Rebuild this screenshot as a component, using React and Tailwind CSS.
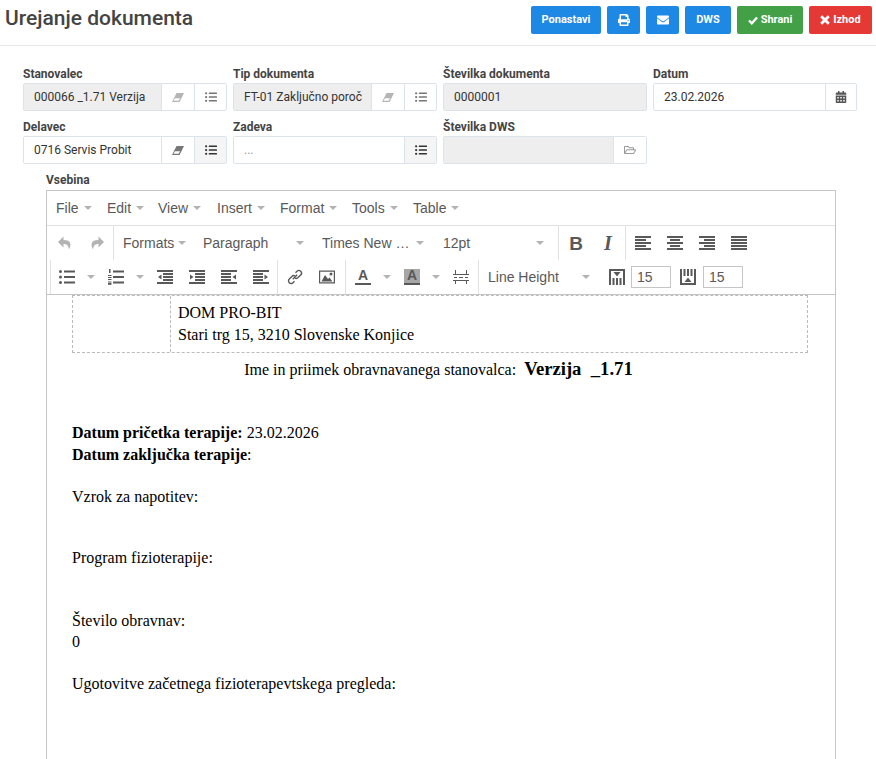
import React from "react";
import {
  FaCalendarAlt,
  FaEnvelope,
  FaListUl,
  FaPrint,
  FaRegFolderOpen,
} from "react-icons/fa";

const Lines = ({ rows }) => (
  <svg width="16" height="16" viewBox="0 0 16 16" fill="#595959">
    {rows.map((r, i) => (
      <rect key={i} x={r[0]} y={r[1]} width={r[2]} height="2" />
    ))}
  </svg>
);

const icons = {
  undo: (
    <svg width="16" height="16" viewBox="0 0 16 16" fill="#b3b3b3">
      <path d="M6.500 1.500 1 7l5.500 5.500V9c3 0 4.800 1 5.500 5.500 2.500-4.500 2.500-9.500-5.500-9.500z" />
    </svg>
  ),
  redo: (
    <svg width="16" height="16" viewBox="0 0 16 16" fill="#b3b3b3">
      <path d="M9.500 1.500 15 7l-5.500 5.500V9c-3 0-4.800 1-5.500 5.500C1.500 10 1.500 5 9.500 5z" />
    </svg>
  ),
  bold: <span className="font-bold text-[19px] leading-none text-[#595959]">B</span>,
  italic: <span className="font-['Liberation_Serif',serif] font-bold italic text-[20px] leading-none text-[#595959]">I</span>,
  alignLeft: <Lines rows={[[0, 1, 16], [0, 4, 11], [0, 7, 16], [0, 10, 11], [0, 13, 16]]} />,
  alignCenter: <Lines rows={[[0, 1, 16], [3, 4, 10], [0, 7, 16], [3, 10, 10], [0, 13, 16]]} />,
  alignRight: <Lines rows={[[0, 1, 16], [5, 4, 11], [0, 7, 16], [5, 10, 11], [0, 13, 16]]} />,
  alignJustify: <Lines rows={[[0, 1, 16], [0, 4, 16], [0, 7, 16], [0, 10, 16], [0, 13, 16]]} />,
  bullist: (
    <svg width="16" height="16" viewBox="0 0 16 16" fill="#595959">
      <circle cx="1.500" cy="2.500" r="1.500" />
      <circle cx="1.500" cy="8" r="1.500" />
      <circle cx="1.500" cy="13.500" r="1.500" />
      <rect x="5" y="1.500" width="11" height="2" />
      <rect x="5" y="7" width="11" height="2" />
      <rect x="5" y="12.500" width="11" height="2" />
    </svg>
  ),
  numlist: (
    <svg width="16" height="16" viewBox="0 0 16 16" fill="#595959">
      <rect x="5" y="1.500" width="11" height="2" />
      <rect x="5" y="7" width="11" height="2" />
      <rect x="5" y="12.500" width="11" height="2" />
      <rect x="1" y="0" width="1.500" height="4" />
      <rect x="0" y="6" width="3.500" height="1" />
      <rect x="0" y="8" width="3.500" height="1" />
      <rect x="0" y="10" width="3.500" height="1" />
      <rect x="0" y="12.500" width="3.500" height="1" />
      <rect x="0" y="14" width="3.500" height="1" />
      <rect x="0" y="15.200" width="3.500" height="0.800" />
    </svg>
  ),
  outdent: (
    <svg width="16" height="16" viewBox="0 0 16 16" fill="#595959">
      <rect x="0" y="1" width="16" height="2" />
      <rect x="6" y="4" width="10" height="2" />
      <rect x="6" y="7" width="10" height="2" />
      <rect x="6" y="10" width="10" height="2" />
      <rect x="0" y="13" width="16" height="2" />
      <path d="M4.500 5.500v5L1 8z" />
    </svg>
  ),
  indent: (
    <svg width="16" height="16" viewBox="0 0 16 16" fill="#595959">
      <rect x="0" y="1" width="16" height="2" />
      <rect x="6" y="4" width="10" height="2" />
      <rect x="6" y="7" width="10" height="2" />
      <rect x="6" y="10" width="10" height="2" />
      <rect x="0" y="13" width="16" height="2" />
      <path d="M1 5.500v5L4.500 8z" />
    </svg>
  ),
  ltr: (
    <svg width="16" height="16" viewBox="0 0 16 16" fill="#595959">
      <rect x="0" y="1" width="16" height="2" />
      <rect x="0" y="4" width="10" height="2" />
      <rect x="0" y="7" width="10" height="2" />
      <rect x="0" y="10" width="10" height="2" />
      <rect x="0" y="13" width="16" height="2" />
      <path d="M15 5.500v5L11.500 8z" />
    </svg>
  ),
  rtl: (
    <svg width="16" height="16" viewBox="0 0 16 16" fill="#595959">
      <rect x="0" y="1" width="16" height="2" />
      <rect x="0" y="4" width="10" height="2" />
      <rect x="0" y="7" width="10" height="2" />
      <rect x="0" y="10" width="10" height="2" />
      <rect x="0" y="13" width="16" height="2" />
      <path d="M11.500 5.500v5L15 8z" />
    </svg>
  ),
  link: (
    <svg width="16" height="16" viewBox="0 0 16 16" fill="none" stroke="#595959" strokeWidth="1.400">
      <path d="M5.800 10.200 10.200 5.800" />
      <path d="M8.500 3.800 10 2.300a2.600 2.600 0 0 1 3.700 3.700l-2.600 2.600a2.600 2.600 0 0 1-3.200.4" />
      <path d="M7.500 12.200 6 13.700A2.600 2.600 0 0 1 2.300 10l2.600-2.600a2.600 2.600 0 0 1 3.200-.4" />
    </svg>
  ),
  image: (
    <svg width="16" height="16" viewBox="0 0 16 16" fill="#595959">
      <path d="M0 1.500h16v13H0zM1.200 2.700v10.600h13.600V2.700z" fillRule="evenodd" />
      <path d="M2.500 12.500 6 6l3 4 1.500-1.500 3 4z" />
      <circle cx="12" cy="5" r="1.500" />
    </svg>
  ),
  forecolor: (
    <span className="flex flex-col items-center w-4 h-4 border-b-2 border-[#595959] font-bold text-[14px] leading-[13px] text-[#595959]">
      A
    </span>
  ),
  backcolor: (
    <span className="flex flex-col items-center w-4 h-4 bg-[#a6a6a6] border-b-2 border-[#595959] font-bold text-[14px] leading-[13px] text-[#595959]">
      A
    </span>
  ),
  pagebreak: (
    <svg width="16" height="16" viewBox="0 0 16 16" fill="#595959">
      <rect x="2" y="1" width="1" height="4" />
      <rect x="13" y="1" width="1" height="4" />
      <rect x="0" y="5" width="16" height="1" />
      <rect x="1" y="8" width="3" height="1" />
      <rect x="6" y="8" width="4" height="1" />
      <rect x="12" y="8" width="3" height="1" />
      <rect x="0" y="11" width="16" height="1" />
      <rect x="2" y="11" width="1" height="4" />
      <rect x="13" y="11" width="1" height="4" />
    </svg>
  ),
  tableBefore: (
    <svg width="16" height="16" viewBox="0 0 16 16" fill="#595959">
      <rect x="0" y="0" width="16" height="2" />
      <rect x="0" y="2" width="2" height="14" />
      <rect x="3.500" y="9" width="2" height="7" />
      <rect x="7" y="9" width="2" height="7" />
      <rect x="10.500" y="9" width="2" height="7" />
      <rect x="14" y="2" width="2" height="14" />
      <path d="M4.500 3h7L8 7.500z" />
    </svg>
  ),
  tableAfter: (
    <svg width="16" height="16" viewBox="0 0 16 16" fill="#595959">
      <rect x="0" y="0" width="2" height="14" />
      <rect x="3.500" y="0" width="2" height="7" />
      <rect x="7" y="0" width="2" height="7" />
      <rect x="10.500" y="0" width="2" height="7" />
      <rect x="14" y="0" width="2" height="14" />
      <rect x="0" y="14" width="16" height="2" />
      <path d="M4.500 13h7L8 8.500z" />
    </svg>
  ),
};

const Caret = () => (
  <span className="w-0 h-0 border-x-[4px] border-x-transparent border-t-[4px] border-t-[#b3b3b3]" />
);

const IconBtn = ({ name }) => (
  <div className="w-8 h-[34px] flex items-center justify-center">{icons[name]}</div>
);

const SplitCaret = () => (
  <div className="w-4 h-[34px] flex items-center justify-center">
    <Caret />
  </div>
);

const ListBox = ({ label, className }) => (
  <div className={`h-[34px] pl-[9px] flex items-center justify-between text-[14px] text-[#595959] ${className}`}>
    <span>{label}</span>
    <Caret />
  </div>
);

const Sep = () => <div className="w-px h-[34px] bg-[#e2e2e2]" />;

const MenuItem = ({ label, width }) => (
  <div className={`${width} flex items-center gap-[5px] text-[14px] text-[#595959]`}>
    <span>{label}</span>
    <Caret />
  </div>
);

const SmallInput = ({ value }) => (
  <div className="w-10 h-[22px] border border-[#c5c5c5] pl-[5px] text-[14px] leading-[20px] text-[#595959]">{value}</div>
);

const HeaderBtn = ({ className, children }) => (
  <button className={`h-[28px] rounded-[2px] flex items-center justify-center gap-[3px] text-white text-[11px] font-bold ${className}`}>
    {children}
  </button>
);

const AddonBtn = ({ children, active, width = "w-8" }) => (
  <div className={`${width} h-full shrink-0 flex items-center justify-center border-l border-[#dde3ea] text-[12px] ${active ? "bg-[#f5f5f5]" : "bg-white"}`}>
    {children}
  </div>
);

const Field = ({ label, value, disabled, placeholder, children }) => (
  <div className="w-[204px] flex flex-col">
    <label className="h-[18px] text-[12px] font-bold leading-[18px] text-[#444]">{label}</label>
    <div className="h-[28px] flex border border-[#dde3ea] rounded-[2px] overflow-hidden">
      <div className={`flex-1 min-w-0 pl-[10px] whitespace-nowrap text-[12px] leading-[26px] ${disabled ? "bg-[#eeeeee]" : "bg-white"} ${placeholder ? "text-[#999]" : "text-[#333]"}`}>
        {value}
      </div>
      {children}
    </div>
  </div>
);

const Eraser = ({ muted }) => (
  <AddonBtn width="w-[33px]">
    <svg width="12" height="9" viewBox="0 0 12 9" fill={muted ? "#b5b5b5" : "#777777"}>
      <path d="M4.500 0H12L7.500 9H0zM3 5.200 1.500 7.800h5.200l1.300-2.600z" fillRule="evenodd" />
    </svg>
  </AddonBtn>
);

const ListIcon = ({ muted, active }) => (
  <AddonBtn active={active}>
    <FaListUl className={muted ? "text-[#777777]" : "text-[#333333]"} />
  </AddonBtn>
);

export default function App() {
  return (
    <div className="h-screen overflow-hidden bg-white font-['Roboto',sans-serif]">
      {/* HEADER */}
      <div className="h-[46px] border-b border-[#e7e7e7] pl-[5px] pr-[4px] flex justify-between items-start">
        <h1 className="text-[21px] font-medium leading-[36px] text-[#444]">Urejanje dokumenta</h1>
        <div className="flex gap-[6px] pt-[6px]">
          <HeaderBtn className="w-[70px] bg-[#1e88e5]">Ponastavi</HeaderBtn>
          <HeaderBtn className="w-[33px] bg-[#1e88e5]"><FaPrint className="text-[12px]" /></HeaderBtn>
          <HeaderBtn className="w-[33px] bg-[#1e88e5]"><FaEnvelope className="text-[12px]" /></HeaderBtn>
          <HeaderBtn className="w-[46px] bg-[#1e88e5]">DWS</HeaderBtn>
          <HeaderBtn className="w-[66px] bg-[#43a047]">
            <svg width="10" height="9" viewBox="0 0 10 9" fill="none" stroke="white" strokeWidth="2.400">
              <path d="M1 4.500 3.800 7.300 9 1.500" />
            </svg>
            Shrani
          </HeaderBtn>
          <HeaderBtn className="w-[63px] bg-[#e53935]">
            <svg width="10" height="10" viewBox="0 0 10 10" fill="none" stroke="white" strokeWidth="2.800">
              <path d="M1.200 1.200 8.800 8.800M8.800 1.200 1.200 8.800" />
            </svg>
            Izhod
          </HeaderBtn>
        </div>
      </div>

      {/* FORM */}
      <div className="pl-[23px] pt-[19px] flex flex-col gap-[7px]">
        <div className="flex gap-[6px]">
          <Field label="Stanovalec" value="000066 _1.71 Verzija" disabled>
            <Eraser muted />
            <ListIcon muted />
          </Field>
          <Field label="Tip dokumenta" value="FT-01 Zaključno poroč" disabled>
            <Eraser muted />
            <ListIcon muted />
          </Field>
          <Field label="Številka dokumenta" value="0000001" disabled />
          <Field label="Datum" value="23.02.2026">
            <AddonBtn width="w-[31px]"><FaCalendarAlt className="text-[#555555]" /></AddonBtn>
          </Field>
        </div>
        <div className="flex gap-[6px]">
          <Field label="Delavec" value="0716 Servis Probit">
            <Eraser />
            <ListIcon active />
          </Field>
          <Field label="Zadeva" value="..." placeholder>
            <ListIcon active />
          </Field>
          <Field label="Številka DWS" value="" disabled>
            <AddonBtn width="w-[33px]"><FaRegFolderOpen className="text-[#999999]" /></AddonBtn>
          </Field>
        </div>
      </div>

      {/* EDITOR */}
      <div className="pl-[46px] pt-[8px]">
        <label className="block h-[18px] text-[12px] font-bold leading-[16px] text-[#444]">Vsebina</label>
        <div className="w-[790px] h-[600px] border border-[#c5c5c5] font-['Liberation_Sans',sans-serif]">
          <div className="h-[35px] pl-[9px] flex items-center border-b border-[#e2e2e2]">
            <MenuItem label="File" width="w-[51px]" />
            <MenuItem label="Edit" width="w-[51px]" />
            <MenuItem label="View" width="w-[59px]" />
            <MenuItem label="Insert" width="w-[63px]" />
            <MenuItem label="Format" width="w-[72px]" />
            <MenuItem label="Tools" width="w-[61px]" />
            <MenuItem label="Table" />
          </div>
          <div className="flex pl-[2px] h-[34px]">
            <IconBtn name="undo" />
            <IconBtn name="redo" />
            <Sep />
            <ListBox label="Formats" className="w-[80px] pr-[8px]" />
            <ListBox label="Paragraph" className="w-[119px] pr-[9px]" />
            <ListBox label="Times New …" className="w-[121px] pr-[10px]" />
            <ListBox label="12pt" className="w-[124px] pr-[14px]" />
            <Sep />
            <div className="w-px" />
            <IconBtn name="bold" />
            <IconBtn name="italic" />
            <div className="w-px" />
            <Sep />
            <div className="w-px" />
            <IconBtn name="alignLeft" />
            <IconBtn name="alignCenter" />
            <IconBtn name="alignRight" />
            <IconBtn name="alignJustify" />
          </div>
          <div className="flex pl-[3px] h-[34px] items-center">
            <Sep />
            <IconBtn name="bullist" />
            <SplitCaret />
            <div className="w-px" />
            <IconBtn name="numlist" />
            <SplitCaret />
            <div className="w-px" />
            <IconBtn name="outdent" />
            <IconBtn name="indent" />
            <IconBtn name="ltr" />
            <IconBtn name="rtl" />
            <Sep />
            <div className="w-px" />
            <IconBtn name="link" />
            <IconBtn name="image" />
            <div className="w-[2px]" />
            <Sep />
            <div className="w-px" />
            <IconBtn name="forecolor" />
            <SplitCaret />
            <div className="w-px" />
            <IconBtn name="backcolor" />
            <SplitCaret />
            <div className="w-px" />
            <IconBtn name="pagebreak" />
            <div className="w-px" />
            <Sep />
            <ListBox label="Line Height" className="w-[121px] pr-[10px]" />
            <div className="w-[9px]" />
            {icons.tableBefore}
            <div className="w-[6px]" />
            <SmallInput value="15" />
            <div className="w-[9px]" />
            {icons.tableAfter}
            <div className="w-[7px]" />
            <SmallInput value="15" />
          </div>

          {/* DOCUMENT */}
          <div className="border-t border-[#c5c5c5] pl-[25px] pr-[27px] font-['Liberation_Serif',serif] text-[16px] text-black">
            <div className="flex h-[58px] border border-dashed border-[#bbbbbb]">
              <div className="w-[98px] border-r border-dashed border-[#bbbbbb]" />
              <div className="pl-[7px] pt-[6px] leading-[22px]">
                <p>DOM PRO-BIT</p>
                <p>Stari trg 15, 3210 Slovenske Konjice</p>
              </div>
            </div>
            <p className="mt-[4px] pr-[3px] text-center leading-[24px]">
              Ime in priimek obravnavanega stanovalca:&nbsp; <b className="text-[18.67px]">Verzija&nbsp; _1.71</b>
            </p>
            <p className="mt-[40px] leading-[22px]"><b>Datum pričetka terapije:</b> 23.02.2026</p>
            <p className="leading-[22px]"><b>Datum zaključka terapije</b>:</p>
            <p className="mt-[20px] leading-[22px]">Vzrok za napotitev:</p>
            <p className="mt-[39px] leading-[22px]">Program fizioterapije:</p>
            <p className="mt-[41px] leading-[22px]">Število obravnav:</p>
            <p className="leading-[20px]">0</p>
            <p className="mt-[21px] leading-[22px]">Ugotovitve začetnega fizioterapevtskega pregleda:</p>
          </div>
        </div>
      </div>
    </div>
  );
}
